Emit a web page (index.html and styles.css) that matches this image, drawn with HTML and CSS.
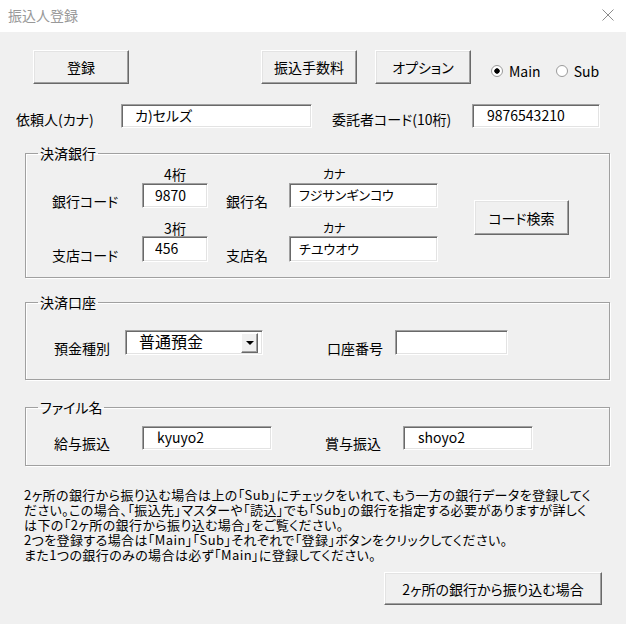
FILE: index.html
```html
<!DOCTYPE html>
<html lang="ja">

<head>
  <meta charset="utf-8" />
  <title>振込人登録</title>
  <link rel="stylesheet" href="styles.css">
</head>

<body>
  <div class="window">
    <!-- =================== タイトル =================== -->
    <div class="titlebar">
      <span class="title">振込人登録</span>
      <svg class="close" width="12" height="12" viewBox="0 0 12 12">
        <path d="M0.5 0.5 L11.5 11.5 M11.5 0.5 L0.5 11.5" stroke="#8c8c8c" stroke-width="1" fill="none" />
      </svg>
    </div>

    <div class="content">
      <!-- =================== ボタン =================== -->
      <div class="row top-row">
        <button class="btn btn-reg">登録</button>
        <button class="btn btn-fee">振込手数料</button>
        <button class="btn btn-opt">オプション</button>
        <div class="radios">
          <label class="radio"><span class="dot checked"></span>Main</label>
          <label class="radio"><span class="dot"></span>Sub</label>
        </div>
      </div>

      <div class="row client-row">
        <span class="lbl lbl-client">依頼人(カナ)</span>
        <input class="field f-client" value="カ)セルズ">
        <span class="lbl lbl-code">委託者コード(10桁)</span>
        <input class="field f-code" value="9876543210">
      </div>

      <!-- =================== 決済銀行 =================== -->
      <fieldset class="group g-bank">
        <legend>決済銀行</legend>
        <div class="bank">
          <div class="bank-grid">
            <span class="cap cap-top c2">4桁</span>
            <span class="cap cap-top c4 kana">カナ</span>
            <span class="lbl r2 c1">銀行コード</span>
            <input class="field f-num r2 c2" value="9870">
            <span class="lbl r2 c3 pad">銀行名</span>
            <input class="field f-kana r2 c4" value="フジサンギンコウ">
            <span class="cap cap-bot c2">3桁</span>
            <span class="cap cap-bot c4 kana">カナ</span>
            <span class="lbl r4 c1">支店コード</span>
            <input class="field f-num r4 c2" value="456">
            <span class="lbl r4 c3 pad">支店名</span>
            <input class="field f-kana r4 c4" value="チユウオウ">
          </div>
          <button class="btn btn-search">コード検索</button>
        </div>
      </fieldset>

      <!-- =================== 決済口座 =================== -->
      <fieldset class="group g-account">
        <legend>決済口座</legend>
        <div class="row inner-row">
          <span class="lbl lbl-type">預金種別</span>
          <div class="combo">
            <span class="combo-text">普通預金</span>
            <span class="combo-btn"><i class="arrow"></i></span>
          </div>
          <span class="lbl lbl-no">口座番号</span>
          <input class="field f-no" value="">
        </div>
      </fieldset>

      <!-- =================== ファイル名 =================== -->
      <fieldset class="group g-file">
        <legend>ファイル名</legend>
        <div class="row inner-row">
          <span class="lbl lbl-file">給与振込</span>
          <input class="field f-file" value="kyuyo2">
          <span class="lbl lbl-bonus">賞与振込</span>
          <input class="field f-file" value="shoyo2">
        </div>
      </fieldset>

      <div class="note">
        <span>2ヶ所の銀行から振り込む場合は上の「Sub」にチェックをいれて、もう一方の銀行データを登録してく</span>
        <span>ださい。この場合、「振込先」マスターや「読込」でも「Sub」の銀行を指定する必要がありますが詳しく</span>
        <span>は下の「2ヶ所の銀行から振り込む場合」をご覧ください。</span>
        <span>2つを登録する場合は「Main」「Sub」それぞれで「登録」ボタンをクリックしてください。</span>
        <span>また1つの銀行のみの場合は必ず「Main」に登録してください。</span>
      </div>

      <div class="row bottom-row">
        <button class="btn btn-two">2ヶ所の銀行から振り込む場合</button>
      </div>
    </div>
  </div>
</body>

</html>
```

FILE: styles.css
```css
/* ===== RESET & BODY ===== */
* {
  box-sizing: border-box;
}

body {
  margin: 0;
  background: #f0f0f0;
  font-family: "Noto Sans CJK JP", "Noto Sans", sans-serif;
  font-size: 14px;
  color: #000;
  font-feature-settings: "palt";
}

.window {
  width: 626px;
  height: 624px;
  overflow: hidden;
}

/* ===== TITLE BAR ===== */
.titlebar {
  height: 32px;
  background: #fff;
  display: flex;
  align-items: center;
  justify-content: space-between;
  padding: 0 12px 0 8px;
}

.title {
  font-size: 14px;
  line-height: 16px;
  color: #999;
  margin-top: -3px;
}

.close {
  margin-top: -3px;
}

/* ===== COMMON ===== */
.content {
  padding-top: 18px;
}

.row {
  display: flex;
}

.lbl {
  line-height: 18px;
  white-space: nowrap;
}

.btn {
  font: inherit;
  font-size: 14px;
  color: #000;
  background: #f0f0f0;
  border: 1px solid;
  border-color: #fff #696969 #696969 #fff;
  box-shadow: inset -1px -1px 0 #a0a0a0, inset 1px 1px 0 #e3e3e3;
  padding: 0;
  line-height: 16px;
}

.field {
  font: inherit;
  font-size: 14px;
  color: #000;
  background: #fff;
  border: 1px solid;
  border-color: #a0a0a0 #fff #fff #a0a0a0;
  box-shadow: inset 1px 1px 0 #696969, inset -1px -1px 0 #e3e3e3;
  height: 25px;
  padding: 0 0 2px 13px;
  outline: none;
}

/* ===== TOP ROW ===== */
.top-row {
  padding-left: 33px;
  height: 34px;
}

.btn-reg {
  width: 96px;
}

.btn-fee {
  width: 96px;
  margin-left: 132px;
}

.btn-opt {
  width: 96px;
  margin-left: 18px;
}

.radios {
  display: flex;
  align-self: flex-end;
  margin: 0 0 5px 20px;
  gap: 15px;
}

.radio {
  display: flex;
  align-items: center;
  gap: 6px;
  line-height: 16px;
  font-size: 14px;
}

.dot {
  width: 12px;
  height: 12px;
  border-radius: 50%;
  border: 1px solid #9a9a9a;
  background: #fff;
}

.dot.checked {
  background: radial-gradient(circle, #000 0 2.4px, #fff 3px);
}

/* ===== CLIENT ROW ===== */
.client-row {
  margin-top: 20px;
  padding-left: 16px;
  align-items: flex-end;
}

.lbl-client {
  width: 105px;
}

.f-client {
  width: 191px;
  height: 24px;
}

.lbl-code {
  width: 140px;
  margin-left: 20px;
}

.f-code {
  width: 128px;
  height: 24px;
  padding-left: 14px;
}

/* ===== GROUPS ===== */
.group {
  margin: 0 0 0 25px;
  width: 585px;
  padding: 0;
  border: 1px solid #a0a0a0;
  box-shadow: inset 1px 1px 0 #fff, 1px 1px 0 #fff;
  min-width: 0;
}

.group legend {
  margin-left: 12px;
  padding: 0 2px;
  font-size: 14px;
  line-height: 16px;
}

.g-bank {
  margin-top: 17px;
  padding-bottom: 15px;
}

.bank {
  display: flex;
  padding-left: 26px;
  padding-top: 4px;
}

.bank-grid {
  display: grid;
  grid-template-columns: 90px 66px 81px 149px;
  grid-template-rows: 18px 25px 28px 26px;
}

.cap {
  line-height: 16px;
  align-self: end;
}

.cap-top {
  grid-row: 1;
  margin-bottom: 1px;
}

.cap-bot {
  grid-row: 3;
}

.c1 { grid-column: 1; }
.c2 { grid-column: 2; text-align: center; }
.c3 { grid-column: 3; }
.c4 { grid-column: 4; }
.r2 { grid-row: 2; }
.r4 { grid-row: 4; }

.bank-grid .lbl {
  align-self: end;
  margin-bottom: -2px;
}

.bank-grid .pad {
  padding-left: 18px;
}

.kana {
  text-align: left;
  padding-left: 34px;
  font-size: 12px;
}

.f-num {
  height: 100%;
  width: 100%;
  text-align: left;
  padding-left: 12px;
}

.f-kana {
  height: 100%;
  width: 100%;
  padding-left: 9px;
  font-size: 13px;
}

.btn-search {
  width: 95px;
  height: 35px;
  margin: 35px 0 0 36px;
}

/* ===== 決済口座 ===== */
.g-account {
  margin-top: 16px;
  padding-bottom: 24px;
}

.inner-row {
  padding-left: 28px;
  align-items: flex-end;
}

.g-account .inner-row {
  margin-top: 20px;
}

.lbl-type {
  width: 71px;
  margin-bottom: -2px;
}

.combo {
  width: 138px;
  height: 25px;
  background: #fff;
  border: 1px solid;
  border-color: #a0a0a0 #fff #fff #a0a0a0;
  box-shadow: inset 1px 1px 0 #696969, inset -1px -1px 0 #e3e3e3;
  display: flex;
  align-items: center;
  justify-content: space-between;
  padding: 2px 4px 2px 13px;
}

.combo-text {
  font-size: 16px;
  line-height: 18px;
  margin-top: -3px;
}

.combo-btn {
  width: 17px;
  height: 20px;
  background: #f0f0f0;
  border: 1px solid;
  border-color: #fff #696969 #696969 #fff;
  box-shadow: inset -1px -1px 0 #a0a0a0;
  display: flex;
  align-items: center;
  justify-content: center;
}

.arrow {
  width: 0;
  height: 0;
  border-left: 4px solid transparent;
  border-right: 4px solid transparent;
  border-top: 4px solid #000;
}

.lbl-no {
  width: 68px;
  margin-left: 64px;
  margin-bottom: -2px;
}

.f-no {
  width: 113px;
}

/* ===== ファイル名 ===== */
.g-file {
  margin-top: 19px;
  padding-bottom: 15px;
}

.g-file .inner-row {
  margin-top: 11px;
}

.lbl-file {
  width: 88px;
  margin-bottom: -2px;
}

.f-file {
  width: 130px;
  height: 24px;
  padding-left: 14px;
}

.lbl-bonus {
  width: 78px;
  margin-left: 53px;
  margin-bottom: -2px;
}

/* ===== NOTE ===== */
.note {
  margin: 21px 0 0 24px;
  font-size: 13px;
  letter-spacing: 0.4px;
  display: flex;
  flex-direction: column;
  white-space: nowrap;
}

.note span {
  height: 15px;
  line-height: 15px;
}

.bottom-row {
  justify-content: flex-end;
  padding-right: 24px;
  margin-top: 10px;
}

.btn-two {
  width: 218px;
  height: 33px;
}
```
